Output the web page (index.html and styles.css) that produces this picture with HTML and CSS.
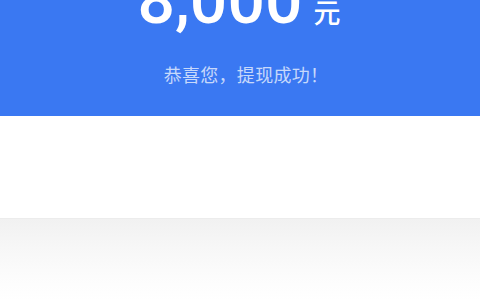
FILE: index.html
```html
<!DOCTYPE html>
<html lang="zh-CN">
<head>
  <meta charset="UTF-8">
  <meta name="viewport" content="width=device-width, initial-scale=1.0">
  <title>提现成功</title>
  <link rel="stylesheet" href="styles.css">
</head>
<body>
  <div class="header">
    <div class="amount">
      <span class="number">8,000</span>
      <span class="unit">元</span>
    </div>
    <div class="message">恭喜您，提现成功！</div>
  </div>

  <div class="blank"></div>

  <!-- shadowed panel below -->
  <div class="panel"></div>
</body>
</html>
```

FILE: styles.css
```css
body {
  margin: 0;
  height: 300px;
  overflow: hidden;
  background-color: #fff;
  font-family: Roboto, "Noto Sans CJK SC", sans-serif;
}

.header {
  height: 116px;
  background-color: #3a78f2;
  color: #fff;
  display: flex;
  flex-direction: column;
  align-items: center;
  overflow: hidden;
}

.amount {
  display: flex;
  align-items: baseline;
  gap: 11px;
  margin-top: -31px;
  margin-left: -2px;
  line-height: 64px;
}

.amount .number {
  font-size: 66px;
  font-weight: 500;
}

.amount .unit {
  font-size: 27px;
  font-weight: 500;
}

.message {
  margin-top: 15px;
  padding-left: 12px;
  font-size: 18px;
  letter-spacing: 0.3px;
  color: rgba(255, 255, 255, 0.72);
}

.blank {
  height: 102px;
}

.panel {
  height: 82px;
  border-top: 1px solid #ececec;
  background: linear-gradient(#f1f1f1, #f6f6f6 30%, #fcfcfc 70%, #fff);
}
```
